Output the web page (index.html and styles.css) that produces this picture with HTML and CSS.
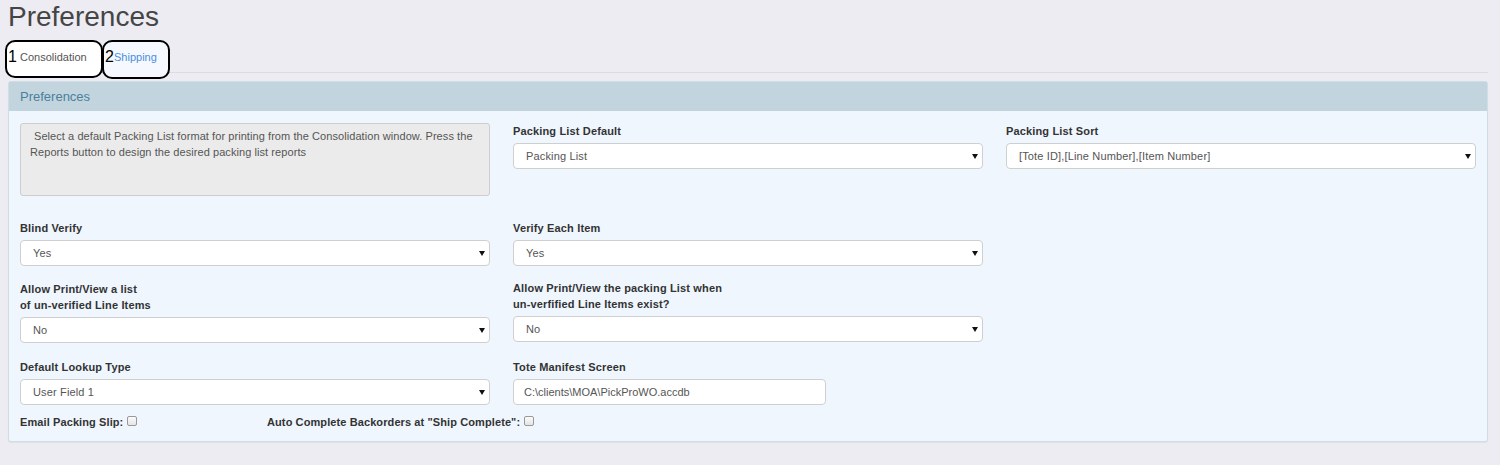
FILE: index.html
```html
<!DOCTYPE html>
<html lang="en">
<head>
<meta charset="utf-8">
<title>Preferences</title>
<link rel="stylesheet" href="styles.css">
</head>
<body>
<div class="page">
  <h1 class="title">Preferences</h1>
  <ul class="tabs">
    <li class="tab tab-active"><span class="tab-num">1</span><span class="tab-text">Consolidation</span></li>
    <li class="tab tab-link"><span class="tab-num">2</span><span class="tab-text">Shipping</span></li>
  </ul>

  <div class="panel">
    <div class="panel-heading">Preferences</div>
    <div class="panel-body">
      <div class="row row-1">
        <div class="info-box">Select a default Packing List format for printing from the Consolidation window. Press the Reports button to design the desired packing list reports</div>
        <div class="group">
          <label class="label">Packing List Default</label>
          <div class="select-wrap"><select class="select"><option>Packing List</option></select></div>
        </div>
        <div class="group">
          <label class="label">Packing List Sort</label>
          <div class="select-wrap"><select class="select"><option>[Tote ID],[Line Number],[Item Number]</option></select></div>
        </div>
      </div>

      <div class="row row-2">
        <div class="group">
          <label class="label">Blind Verify</label>
          <div class="select-wrap"><select class="select"><option>Yes</option></select></div>
        </div>
        <div class="group">
          <label class="label">Verify Each Item</label>
          <div class="select-wrap"><select class="select"><option>Yes</option></select></div>
        </div>
      </div>

      <div class="row row-3">
        <div class="group">
          <label class="label">Allow Print/View a list<br>of un-verified Line Items</label>
          <div class="select-wrap"><select class="select"><option>No</option></select></div>
        </div>
        <div class="group group-up">
          <label class="label">Allow Print/View the packing List when<br>un-verfified Line Items exist?</label>
          <div class="select-wrap"><select class="select"><option>No</option></select></div>
        </div>
      </div>

      <div class="row row-4">
        <div class="group">
          <label class="label">Default Lookup Type</label>
          <div class="select-wrap"><select class="select"><option>User Field 1</option></select></div>
        </div>
        <div class="group">
          <label class="label">Tote Manifest Screen</label>
          <input class="input input-short" type="text" value="C:\clients\MOA\PickProWO.accdb">
        </div>
      </div>

      <div class="checks">
        <label class="check check-email">Email Packing Slip:<input class="checkbox" type="checkbox"></label>
        <label class="check">Auto Complete Backorders at "Ship Complete":<input class="checkbox" type="checkbox"></label>
      </div>
    </div>
  </div>
</div>
</body>
</html>
```

FILE: styles.css
```css
* {
  box-sizing: border-box;
}

html, body {
  margin: 0;
  padding: 0;
}

body {
  background: #edecf2;
  font-family: "Liberation Sans", Arial, sans-serif;
  color: #333;
  width: 1500px;
  height: 465px;
  overflow: hidden;
}

.page {
  padding: 0 12px 0 8px;
}

.title {
  margin: 1px 0 0;
  font-size: 28px;
  line-height: 32px;
  font-weight: normal;
  color: #454545;
}

.tabs {
  list-style: none;
  margin: 7px 0 0;
  padding: 0;
  display: flex;
  height: 33px;
  border-bottom: 1px solid #dcdbe0;
}

.tab {
  position: relative;
  display: flex;
  align-items: center;
  height: 38px;
  border: 2px solid #000;
  border-radius: 10px;
  padding: 0 0 4px 1px;
  font-size: 11px;
}

.tab-active {
  margin-left: -3px;
  width: 98px;
  background: #fff;
  color: #555;
}

.tab-link {
  width: 68px;
  height: 39px;
  margin-left: -1px;
  padding-bottom: 6px;
  background: #f5f9ff;
  color: #4a8fdb;
}

.tab-num {
  font-size: 16px;
  color: #000;
  display: inline-block;
}

.tab-active .tab-num {
  width: 12px;
}

.tab-link .tab-num {
  width: 9px;
}

.panel {
  margin-top: 8px;
  border: 1px solid #cfdde5;
  border-radius: 3px;
  background: #eff6fe;
  box-shadow: 0 1px 1px rgba(0, 0, 0, 0.05);
}

.panel-heading {
  height: 29px;
  background: #c2d5de;
  color: #4b7f9d;
  font-size: 13px;
  line-height: 29px;
  padding-left: 11px;
}

.panel-body {
  padding: 12px 11px 11px;
}

.row {
  display: grid;
  grid-template-columns: repeat(3, 1fr);
  column-gap: 23px;
}

.row-1 {
  margin-bottom: 24px;
}

.row-2 {
  margin-bottom: 15px;
}

.row-3 {
  margin-bottom: 16px;
}

.row-4 {
  margin-bottom: 9px;
}

.info-box {
  height: 73px;
  background: #ebebeb;
  border: 1px solid #cdcdcd;
  border-radius: 3px;
  padding: 4px 9px;
  font-size: 11px;
  letter-spacing: 0.07px;
  line-height: 16px;
  color: #555;
  text-indent: 4px;
}

.group {
  display: flex;
  flex-direction: column;
  align-items: flex-start;
}

.group-up {
  margin-top: -1px;
}

.label {
  display: block;
  font-size: 11px;
  line-height: 16px;
  font-weight: bold;
  color: #333;
  letter-spacing: 0.15px;
  margin-bottom: 4px;
}

.select-wrap {
  position: relative;
  width: 100%;
}

.select-wrap::after {
  content: "";
  position: absolute;
  right: 5px;
  top: 11px;
  border-left: 3px solid transparent;
  border-right: 3px solid transparent;
  border-top: 5px solid #111;
  pointer-events: none;
}

.select,
.input {
  display: block;
  width: 100%;
  height: 26px;
  margin: 0;
  border: 1px solid #cfcfcf;
  border-radius: 4px;
  background: #fff;
  font-family: "Liberation Sans", Arial, sans-serif;
  font-size: 11px;
  letter-spacing: 0.15px;
  color: #555;
  -webkit-appearance: none;
  appearance: none;
  padding: 0 0 0 12px;
  outline: none;
}

.input {
  padding-left: 10px;
  letter-spacing: 0;
}

.input-short {
  width: 313px;
}

.checks {
  display: flex;
  align-items: center;
  height: 16px;
}

.check {
  display: inline-flex;
  align-items: center;
  font-size: 11px;
  font-weight: bold;
  letter-spacing: 0.1px;
  color: #333;
  line-height: 16px;
  white-space: pre;
}

.check-email {
  width: 247px;
}

.checkbox {
  -webkit-appearance: none;
  appearance: none;
  width: 10px;
  height: 10px;
  margin: 0 0 3px 4px;
  border: 1px solid #999;
  border-radius: 2px;
  background: linear-gradient(#fbfbfb, #e4e4e4);
}
```
